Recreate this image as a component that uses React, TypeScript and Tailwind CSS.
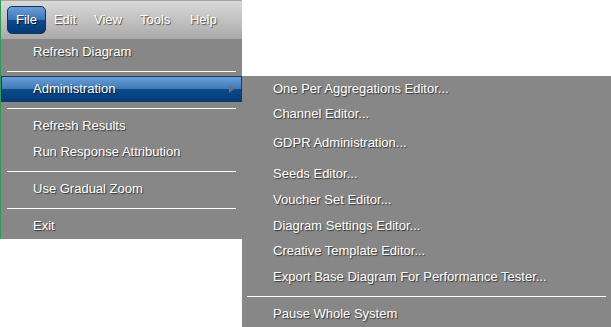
import React from "react";

const shadow = "[text-shadow:1px_1px_1px_rgba(0,0,0,0.6)]";

function Sep({ className = "" }: { className?: string }) {
  return <div className={`h-px bg-white ${className}`} />;
}

function Item({ label, h = "h-[26px]", pl = "pl-[32px]" }: { label: string; h?: string; pl?: string }) {
  return (
    <div className={`flex items-center ${h} ${pl} text-[13px] text-white ${shadow} whitespace-nowrap`}>
      {label}
    </div>
  );
}

export default function App() {
  const menus: [string, string][] = [
    ["Edit", "w-[40px]"],
    ["View", "w-[46px]"],
    ["Tools", "w-[50px]"],
    ["Help", "w-[44px]"],
  ];
  return (
    <div
      className="relative w-[611px] h-[327px] bg-white overflow-hidden"
      style={{ fontFamily: '"Liberation Sans", Arial, sans-serif' }}
    >
      <div className="flex w-[242px] h-[239px] border-l border-[#2f9a55]">
        <div className="flex flex-col w-full">
          {/* menubar */}
          <div className="flex items-center h-[39px] border-t border-[#a4a4a4] bg-[linear-gradient(to_bottom,#d8d8d8,#c4c4c4_45%,#a9a9a9)] pl-[6px]">
            <div className="flex items-center h-[28px] px-[8px] rounded-[5px] border border-[#0d335c] bg-[linear-gradient(to_bottom,#6c9fd6,#3b76b9_48%,#0b4a8c_52%,#053a74)] text-[13px] text-white [text-shadow:1px_1px_1px_rgba(0,0,0,0.6)]">
              File
            </div>
            {menus.map(([m, w]) => (
              <div key={m} className={`flex items-center h-[28px] ${w} pl-[8px] text-[13px] text-white ${shadow}`}>
                {m}
              </div>
            ))}
          </div>
          {/* dropdown panel */}
          <div className="flex flex-col flex-1 bg-[#878787]">
            <Item label="Refresh Diagram" />
            <Sep className="mx-[6px] mt-[6px] mb-[4px]" />
            <div className="relative flex items-center h-[26px] pl-[31px] border border-[#0c3d6e] bg-[linear-gradient(to_bottom,#6b9ed5,#3e7aba_48%,#0b4a8a_52%,#053c78)] text-[13px] text-white [text-shadow:1px_1px_1px_rgba(0,0,0,0.6)]">
              Administration
              <svg className="absolute left-[227px] top-[8px]" width="5" height="8" viewBox="0 0 5 8">
                <path d="M0 0 L5 4 L0 8 Z" fill="#6f6f6f" />
              </svg>
            </div>
            <Sep className="mx-[6px] mt-[6px] mb-[4px]" />
            <Item label="Refresh Results" />
            <Item label="Run Response Attribution" />
            <Sep className="mx-[6px] mt-[6px] mb-[4px]" />
            <Item label="Use Gradual Zoom" />
            <Sep className="mx-[6px] mt-[6px] mb-[4px]" />
            <Item label="Exit" />
          </div>
        </div>
      </div>

      {/* submenu flyout */}
      <div className="absolute left-[242px] top-[76px] w-[369px] h-[251px] bg-[#878787] flex flex-col">
        <Item label="One Per Aggregations Editor..." h="h-[25px]" pl="pl-[31px]" />
        <Item label="Channel Editor..." h="h-[25px]" pl="pl-[31px]" />
        <div className="h-[4px]" />
        <Item label="GDPR Administration..." h="h-[25px]" pl="pl-[31px]" />
        <div className="h-[6px]" />
        <Item label="Seeds Editor..." pl="pl-[31px]" />
        <Item label="Voucher Set Editor..." pl="pl-[31px]" />
        <Item label="Diagram Settings Editor..." h="h-[25px]" pl="pl-[31px]" />
        <Item label="Creative Template Editor..." pl="pl-[31px]" />
        <Item label="Export Base Diagram For Performance Tester..." pl="pl-[31px]" />
        <Sep className="ml-[5px] mr-[5px] mt-[6px] mb-[4px]" />
        <Item label="Pause Whole System" h="h-[25px]" pl="pl-[31px]" />
      </div>
    </div>
  );
}
